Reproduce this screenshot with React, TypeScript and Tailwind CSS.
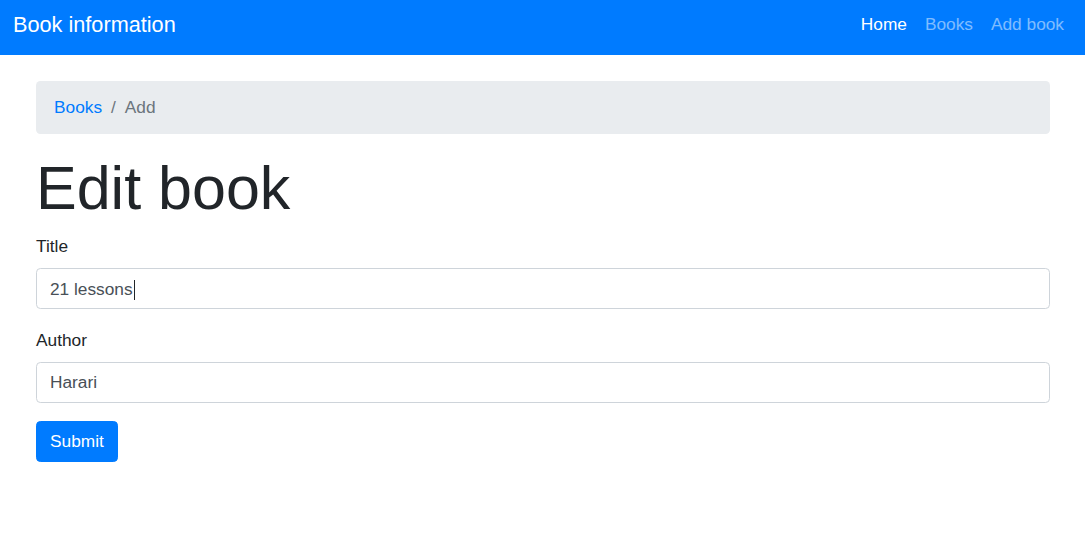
import React from "react";

export default function App() {
  const font = { fontFamily: '"Liberation Sans", Arial, sans-serif' };
  return (
    <div className="min-h-[551px] bg-white text-[#212529]" style={font}>
      <nav className="flex h-[55px] items-start justify-between bg-[#007bff] pl-[13px] pr-[12px]">
        <div className="mt-[8px] text-[21.7px] leading-[33px] text-white">Book information</div>
        <div className="mt-[11px] flex text-[17.3px] leading-[26.4px]">
          <span className="px-[9px] text-white">Home</span>
          <span className="px-[9px] text-white/50">Books</span>
          <span className="px-[9px] text-white/50">Add book</span>
        </div>
      </nav>
      <main className="pl-[36px] pr-[35px] pt-[26px]">
        <div className="flex h-[53px] items-center rounded-[4.4px] bg-[#e9ecef] px-[18px] text-[17.3px] leading-[26.4px]">
          <span className="text-[#007bff]">Books</span>
          <span className="px-[9px] text-[#6c757d]">/</span>
          <span className="text-[#6c757d]">Add</span>
        </div>
        <h1 className="mt-[17px] text-[61px] font-normal leading-[74px] text-[#212529]">Edit book</h1>
        <div className="mt-[8px] flex flex-col">
          <label className="text-[17.3px] leading-[26.4px] text-[#212529]">Title</label>
          <div className="mt-[9px] flex h-[41px] items-center rounded-[4.4px] border border-[#ced4da] px-[13px] pt-[2px] text-[17.3px] text-[#495057]">
            <span>21 lessons</span>
            <span className="ml-[1px] inline-block h-[20px] w-[1px] bg-[#212529]" />
          </div>
          <label className="mt-[18px] text-[17.3px] leading-[26.4px] text-[#212529]">Author</label>
          <div className="mt-[8px] flex h-[41px] items-center rounded-[4.4px] border border-[#ced4da] px-[13px] pt-[2px] text-[17.3px] text-[#495057]">
            <span>Harari</span>
          </div>
          <div className="mt-[18px]">
            <button className="h-[41px] w-[82px] rounded-[4.4px] border border-[#007bff] bg-[#007bff] pt-[2px] text-[17.3px] text-white">
              Submit
            </button>
          </div>
        </div>
      </main>
    </div>
  );
}
